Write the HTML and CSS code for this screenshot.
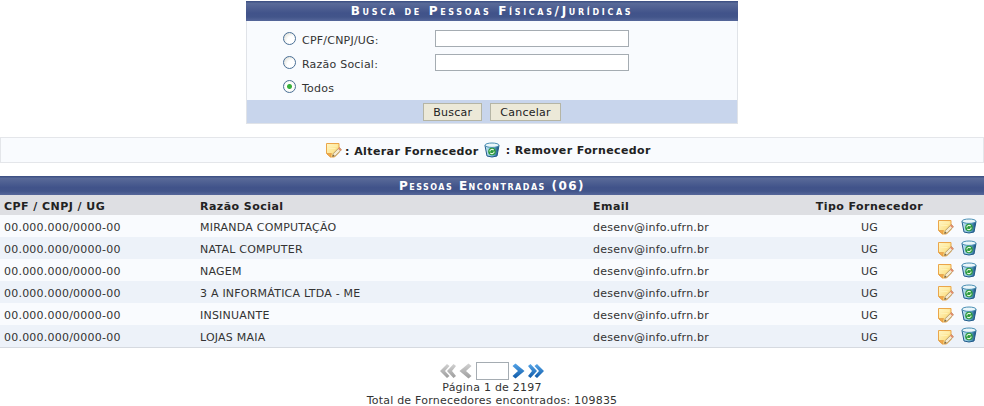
FILE: index.html
```html
<!DOCTYPE html>
<html lang="pt">
<head>
<meta charset="utf-8">
<title>Busca de Pessoas</title>
<link rel="stylesheet" href="styles.css">
</head>
<body>
<svg class="defs" width="0" height="0" aria-hidden="true">
  <defs>
    <linearGradient id="note" x1="0" y1="0" x2="1" y2="1"><stop offset="0" stop-color="#fff7c8"/><stop offset="1" stop-color="#fbd568"/></linearGradient>
    <linearGradient id="bin" x1="0" y1="0" x2="1" y2="0"><stop offset="0" stop-color="#cfeaf4"/><stop offset=".55" stop-color="#6fb4d4"/><stop offset="1" stop-color="#174f7c"/></linearGradient>
    <linearGradient id="blue" x1="0" y1="0" x2="0" y2="1"><stop offset="0" stop-color="#55a5e8"/><stop offset="1" stop-color="#0f5aa8"/></linearGradient>
    <linearGradient id="grey" x1="0" y1="0" x2="0" y2="1"><stop offset="0" stop-color="#d2d2d2"/><stop offset="1" stop-color="#9c9c9c"/></linearGradient>
    <symbol id="i-edit" viewBox="0 0 16 16">
      <path d="M.5 1.500h12.500v9l-4.500 4.500h-4l-4-3.500z" fill="url(#note)" stroke="#eba64a"/>
      <path d="M.8 11.500l3.700 3.500 1-3.500z" fill="#f2a94e" stroke="#d98a2e" stroke-width=".5"/>
      <path d="M2.500 4h9M2.500 6.500h7" stroke="#fff2b5"/>
      <path d="M6.500 14.500l.8-3 6-6 2.200 2.200-6 6z" fill="#f4ead0" stroke="#a98a55" stroke-width=".8"/>
      <path d="M12 6.800l2.200 2.200 1.300-1.300-2.200-2.200z" fill="#e58a6a"/>
      <path d="M6.500 14.500l.5-1.800 1.300 1.300z" fill="#5a4a30"/>
    </symbol>
    <symbol id="i-bin" viewBox="0 0 16 16">
      <path d="M1 3.500l2 10.500q5 2 10 0l2-10.500z" fill="url(#bin)" stroke="#1f5a8a"/>
      <ellipse cx="8" cy="3.200" rx="7" ry="2.200" fill="#eaf6fa" stroke="#4a8fb4"/>
      <circle cx="8" cy="9.500" r="3.800" fill="#2c9a3c"/>
      <path d="M5.800 9.500a2.200 2.200 0 0 1 3.900-1.300M10.200 9.500a2.200 2.200 0 0 1-3.900 1.300" fill="none" stroke="#eaf8e4" stroke-width="1.100"/>
    </symbol>
    <symbol id="i-next" viewBox="0 0 13 16">
      <path d="M.5 3l3-2.500 9 7.500-9 7.500-3-2.500 5.500-5z"/>
    </symbol>
    <symbol id="i-next2" viewBox="0 0 16 16">
      <path d="M0 3l2.500-2 6.500 7-6.500 7-2.500-2 4-5zM6.500 3l2.500-2 7 7-7 7-2.500-2 4.500-5z"/>
    </symbol>
  </defs>
</svg>

<form class="search">
  <h2 class="search-title">Busca de Pessoas Físicas/Jurídicas</h2>
  <div class="search-fields">
    <label class="field"><span class="radio"></span><span class="field-label">CPF/CNPJ/UG:</span><input class="text-input" type="text"></label>
    <label class="field"><span class="radio"></span><span class="field-label">Razão Social:</span><input class="text-input" type="text"></label>
    <label class="field"><span class="radio radio-on"></span><span class="field-label">Todos</span></label>
  </div>
  <div class="search-actions">
    <button class="btn" type="button">Buscar</button>
    <button class="btn" type="button">Cancelar</button>
  </div>
</form>

<div class="legend">
  <svg class="icon legend-edit"><use href="#i-edit"/></svg>
  <span class="legend-text legend-text-low">: Alterar Fornecedor</span>
  <svg class="icon legend-bin"><use href="#i-bin"/></svg>
  <span class="legend-text">: Remover Fornecedor</span>
</div>

<table class="results">
  <caption>Pessoas Encontradas (06)</caption>
  <thead>
    <tr><th class="c-doc">CPF / CNPJ / UG</th><th class="c-name">Razão Social</th><th class="c-mail">Email</th><th class="c-type">Tipo Fornecedor</th><th class="c-act"></th><th class="c-act2"></th></tr>
  </thead>
  <tbody>
    <tr><td>00.000.000/0000-00</td><td>MIRANDA COMPUTAÇÃO</td><td>desenv@info.ufrn.br</td><td class="center">UG</td><td class="act"><svg class="icon edit"><use href="#i-edit"/></svg></td><td class="act"><svg class="icon bin"><use href="#i-bin"/></svg></td></tr>
    <tr><td>00.000.000/0000-00</td><td>NATAL COMPUTER</td><td>desenv@info.ufrn.br</td><td class="center">UG</td><td class="act"><svg class="icon edit"><use href="#i-edit"/></svg></td><td class="act"><svg class="icon bin"><use href="#i-bin"/></svg></td></tr>
    <tr><td>00.000.000/0000-00</td><td>NAGEM</td><td>desenv@info.ufrn.br</td><td class="center">UG</td><td class="act"><svg class="icon edit"><use href="#i-edit"/></svg></td><td class="act"><svg class="icon bin"><use href="#i-bin"/></svg></td></tr>
    <tr><td>00.000.000/0000-00</td><td>3 A INFORMÁTICA LTDA - ME</td><td>desenv@info.ufrn.br</td><td class="center">UG</td><td class="act"><svg class="icon edit"><use href="#i-edit"/></svg></td><td class="act"><svg class="icon bin"><use href="#i-bin"/></svg></td></tr>
    <tr><td>00.000.000/0000-00</td><td>INSINUANTE</td><td>desenv@info.ufrn.br</td><td class="center">UG</td><td class="act"><svg class="icon edit"><use href="#i-edit"/></svg></td><td class="act"><svg class="icon bin"><use href="#i-bin"/></svg></td></tr>
    <tr><td>00.000.000/0000-00</td><td>LOJAS MAIA</td><td>desenv@info.ufrn.br</td><td class="center">UG</td><td class="act"><svg class="icon edit"><use href="#i-edit"/></svg></td><td class="act"><svg class="icon bin"><use href="#i-bin"/></svg></td></tr>
  </tbody>
</table>

<div class="pager">
  <div class="pager-nav">
    <svg class="arrow2 off flip"><use href="#i-next2"/></svg>
    <svg class="arrow off flip"><use href="#i-next"/></svg>
    <span class="page-box"></span>
    <svg class="arrow on"><use href="#i-next"/></svg>
    <svg class="arrow2 on"><use href="#i-next2"/></svg>
  </div>
  <div>Página 1 de 2197</div>
  <div>Total de Fornecedores encontrados: 109835</div>
</div>
</body>
</html>
```
FILE: styles.css
```css
* { box-sizing: border-box; }
html, body { margin: 0; padding: 0; }
body {
  width: 984px;
  height: 406px;
  overflow: hidden;
  background: #fff;
  color: #222;
  font: 11px/13px "DejaVu Sans", Verdana, sans-serif;
  letter-spacing: .22px;
}
.defs { display: block; height: 0; }

.search {
  display: block;
  width: 492px;
  margin: 1px 0 0 246px;
  background: #f9fbfe;
  border: solid #e0e3e8;
  border-width: 0 1px 1px;
}
.search-title, .results caption {
  margin: 0;
  color: #fff;
  font-weight: bold;
  text-align: center;
  font-variant: small-caps;
  background: linear-gradient(#3f5285 0, #3f5285 1px, #5a6b99 2px, #41538a 60%, #42558a 80%, #56679a 100%);
}
.search-title {
  margin: 0 -1px;
  height: 20px;
  font-size: 12px;
  line-height: 21px;
  letter-spacing: 2.670px;
}
.search-fields { height: 79px; padding: 7px 0 0 36px; display: flex; flex-direction: column; }
.field { display: flex; align-items: center; height: 24px; }
.radio {
  flex: none;
  width: 13px;
  height: 13px;
  margin: -4px 6px 0 0;
  border-radius: 50%;
  border: 1px solid #4a6f96;
  background: radial-gradient(circle at 70% 70%, #fff 40%, #d5d5cc 100%);
}
.radio-on { background: radial-gradient(circle, #38b03c 0 2px, #fff 3px, #f2f2ea 100%); }
.field-label { width: 132.500px; color: #333; }
.text-input {
  width: 194px;
  height: 17px;
  border: 1px solid #a5acb2;
  background: #fff;
  padding: 0;
  margin-top: -3px;
}
.search-actions {
  height: 23px;
  background: #c8d5ec;
  display: flex;
  justify-content: center;
  gap: 8px;
  padding-top: 3px;
}
.btn {
  height: 18px;
  padding: 0 9px;
  background: #ece9d8;
  border: 1px solid #b5b5a5;
  color: #222;
  font: 11px/15px "DejaVu Sans", Verdana, sans-serif;
  letter-spacing: .25px;
}

.legend {
  margin-top: 13px;
  height: 26px;
  background: #f9fbfe;
  border: 1px solid #e4e6ea;
  display: flex;
  align-items: center;
  justify-content: center;
  font-weight: bold;
  color: #222;
  letter-spacing: .4px;
  padding-right: 7px;
}
.icon { display: block; width: 16px; height: 16px; }
.legend-edit { margin: -1px 3px 0 0; }
.legend-bin { margin: -1px 6px 0 5px; }
.legend-text { margin-top: 1px; font-size: 11px; }
.legend-text-low { margin-top: 3px; }

.results {
  margin-top: 13px;
  width: 984px;
  border-collapse: separate;
  border-spacing: 0;
  table-layout: fixed;
}
.results caption {
  height: 19px;
  font-size: 12px;
  line-height: 21px;
  letter-spacing: 1.480px;
}
.results th {
  height: 20px;
  padding: 2px 0 0 4px;
  background: #dedfe3;
  text-align: left;
  font-weight: bold;
  color: #222;
  letter-spacing: .45px;
}
.results th.c-type { text-align: center; padding: 2px 0 0 5px; }
.c-doc { width: 196px; }
.c-name { width: 393px; }
.c-mail { width: 211px; }
.c-type { width: 134px; }
.c-act { width: 23px; }
.c-act2 { width: 27px; }
.results td { height: 22px; padding: 2px 0 0 4px; color: #333; }
.results tbody tr:nth-child(odd) td { background: #f9fbfe; }
.results tbody tr:nth-child(even) td { background: #edf2f9; }
.results tbody tr:last-child td { border-bottom: 1px solid #d6dae0; height: 23px; }
.results td.center { text-align: center; padding: 2px 0 0 5px; }
.results td.act { padding: 0; }
.results tbody tr:last-child td.act { padding: 0 0 1px; }
.edit { margin: 2px 0 0 4px; }
.bin { margin: -1px 0 0 4px; }

.pager {
  margin-top: 14px;
  text-align: center;
  color: #333;
  line-height: 13px;
}
.pager-nav {
  display: flex;
  justify-content: center;
  align-items: center;
  gap: 3px;
  height: 18px;
  margin-bottom: 1px;
}
.page-box { width: 33px; height: 18px; margin-left: 1px; border: 1px solid #a5acb2; background: #fff; }
.arrow { width: 13px; height: 16px; }
.arrow2 { width: 16px; height: 16px; }
.off { fill: url(#grey); }
.on { fill: url(#blue); }
.flip { transform: scaleX(-1); }
```
